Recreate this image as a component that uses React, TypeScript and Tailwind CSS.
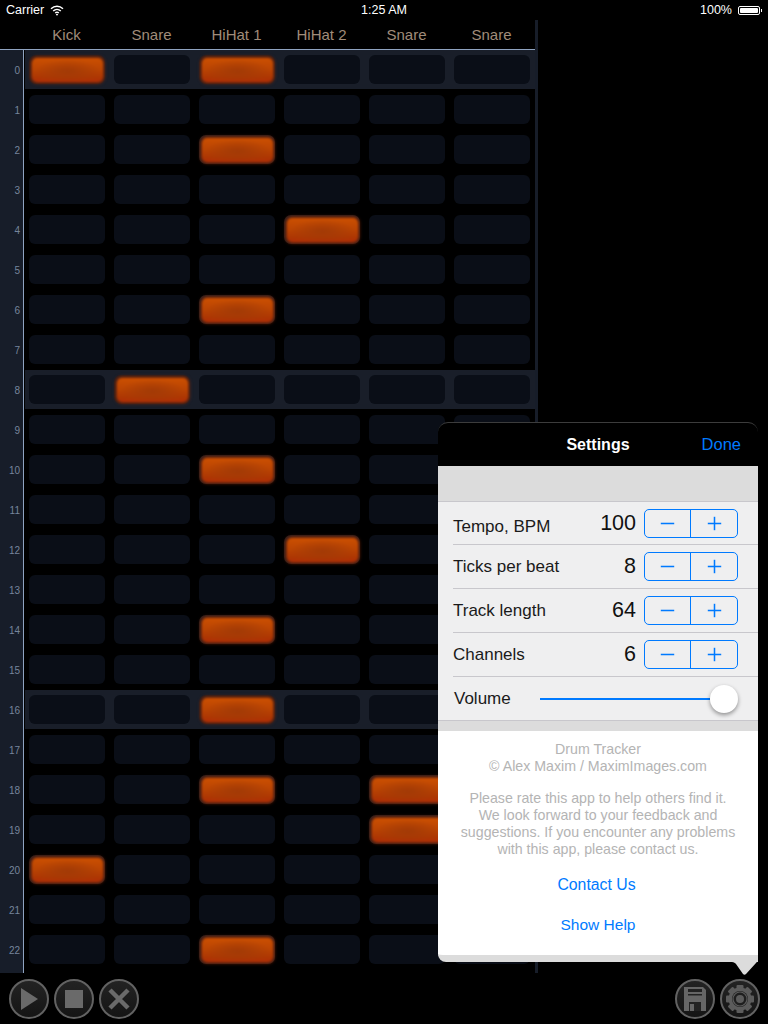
import { Minus, Plus } from 'lucide-react';

const channels = ['Kick', 'Snare', 'HiHat 1', 'HiHat 2', 'Snare', 'Snare'];

// row -> active channels
const hits: Record<number, number[]> = {
  0: [0, 2],
  2: [2],
  4: [3],
  6: [2],
  8: [1],
  10: [2],
  12: [3],
  14: [2],
  16: [2],
  18: [2, 4],
  19: [4],
  20: [0],
  22: [2],
};

const rows = Array.from({ length: 23 }, (_, i) => i);

const Cell = ({ on }: { on: boolean }) => {
  if (!on) return <div className="w-[76px] h-[29px] rounded-[6px] bg-[#0a0e17]" />;
  return (
    <div className="w-[76px] h-[29px] rounded-[7px] bg-[#2a1d1c] flex items-center justify-center">
      <div className="w-[71px] h-[24px] rounded-[5px] blur-[1px] bg-[radial-gradient(ellipse_at_50%_55%,#a23a06_0%,rgba(162,58,6,0)_65%),linear-gradient(180deg,#cb5002_0%,#bb4503_45%,#ad3703_80%,#b22e06_100%)] shadow-[0_0_3px_1px_#9a2c03]" />
    </div>
  );
};

const Row = ({ index }: { index: number }) => {
  const accent = index % 8 === 0;
  return (
    <div className="flex h-10">
      <div className="w-6 shrink-0 bg-[#171d29] border-r border-[#8fa3c0] flex items-center justify-end pr-[3px] text-[10px] text-[#76859c]">
        {index}
      </div>
      <div
        className={
          accent
            ? 'w-[511px] h-[39px] ml-px flex items-center gap-[9px] pl-1 bg-[#191e29]'
            : 'w-[511px] h-[39px] ml-px flex items-center gap-[9px] pl-1'
        }
      >
        {[0, 1, 2, 3, 4, 5].map((c) => (
          <Cell key={c} on={(hits[index] ?? []).includes(c)} />
        ))}
      </div>
    </div>
  );
};

const RoundButton = ({ children }: { children: React.ReactNode }) => (
  <button className="w-10 h-10 rounded-full border-2 border-[#626262] bg-[linear-gradient(180deg,#232323,#151515)] flex items-center justify-center">
    {children}
  </button>
);

const Stepper = () => (
  <div className="w-[94px] h-[29px] rounded-[5px] border border-[#007aff] flex text-[#007aff]">
    <div className="w-[46px] flex items-center justify-center border-r border-[#007aff]">
      <Minus size={23} strokeWidth={1.6} strokeLinecap="butt" />
    </div>
    <div className="flex-1 flex items-center justify-center">
      <Plus size={23} strokeWidth={1.6} strokeLinecap="butt" />
    </div>
  </div>
);

const SettingRow = ({ label, value, first }: { label: string; value: number; first?: boolean }) => (
  <div
    className={
      first
        ? 'h-[43px] ml-[15px] pr-5 flex items-center border-b border-[#c8c7cc]'
        : 'h-11 ml-[15px] pr-5 flex items-center border-b border-[#c8c7cc]'
    }
  >
    <span className={first ? 'text-[17px] text-[#1a1a1a] pt-2' : 'text-[17px] text-[#1a1a1a]'}>{label}</span>
    <span className="ml-auto text-[21.5px] text-[#111] mr-2">{value}</span>
    <Stepper />
  </div>
);

const SettingsPopover = () => (
  <div className="absolute left-[438px] top-[422px] w-[320px] h-[540px] flex flex-col">
    <div className="h-11 shrink-0 bg-black rounded-t-[10px] border-t border-[#3c3c3c] flex items-center justify-center relative">
      <span className="text-[16px] font-bold text-white">Settings</span>
      <span className="absolute right-[17px] text-[16.5px] text-[#007aff]">Done</span>
    </div>
    <div className="h-[36px] shrink-0 bg-[#dcdcdc] border-b border-[#c8c7cc]" />
    <div className="bg-[#efeff0] shrink-0">
      <SettingRow label="Tempo, BPM" value={100} first />
      <SettingRow label="Ticks per beat" value={8} />
      <SettingRow label="Track length" value={64} />
      <SettingRow label="Channels" value={6} />
      <div className="h-11 pl-4 pr-5 flex items-center border-b border-[#c8c7cc]">
        <span className="text-[17px] text-[#1a1a1a] w-[86px] shrink-0">Volume</span>
        <div className="flex-1 flex items-center pt-px">
          <div className="flex-1 h-[2px] bg-[#007aff]" />
          <div className="w-7 h-7 rounded-full bg-white shadow-[0_2px_4px_rgba(0,0,0,0.4)]" />
        </div>
      </div>
    </div>
    <div className="h-[10px] shrink-0 bg-[#dcdcdc]" />
    <div className="flex-1 bg-white rounded-b-[8px] rounded-br-none border-b-[7px] border-[#dcdcdc] flex flex-col items-center text-center pt-[10px] text-[14.2px] leading-[16.7px] text-[#b4b4b4]">
      <p>Drum Tracker</p>
      <p>© Alex Maxim / MaximImages.com</p>
      <p className="mt-[16px]">
        Please rate this app to help others find it.
        <br />
        We look forward to your feedback and
        <br />
        suggestions. If you encounter any problems
        <br />
        with this app, please contact us.
      </p>
      <a className="mt-[18px] pr-[3px] text-[15.8px] leading-5 text-[#007aff]">Contact Us</a>
      <a className="mt-5 text-[15.5px] leading-5 text-[#007aff]">Show Help</a>
    </div>
    <svg className="absolute left-[292px] top-[538px]" width="28" height="16" viewBox="0 0 28 16">
      <path d="M0 2 H2 C4 2 5 3 6 4 L13 14 Q14.500 15.500 16 14 L26 3 Q28 1 28 0 V0 H0 Z" fill="#dcdcdc" />
    </svg>
  </div>
);

export default function App() {
  return (
    <div className="relative w-[768px] h-[1024px] overflow-hidden bg-black font-['Liberation_Sans',sans-serif]">
      {/* status bar */}
      <div className="h-5 flex items-center px-[6px] text-[12.500px] text-white relative">
        <span>Carrier</span>
        <svg className="ml-[6px]" width="14" height="11" viewBox="0 0 14 11" fill="none" stroke="white" strokeWidth="1.400">
          <path d="M1 3.800 C4.500 0.300 9.500 0.300 13 3.800" />
          <path d="M3.200 6 C5.400 3.900 8.600 3.900 10.800 6" />
          <path d="M5.200 8 C6.300 7 7.700 7 8.800 8" />
          <path d="M7 10.800 L5.800 9.500 C6.500 8.900 7.500 8.900 8.200 9.500 Z" fill="white" stroke="none" />
        </svg>
        <span className="absolute left-0 right-0 text-center">1:25 AM</span>
        <span className="ml-auto mr-[6px]">100%</span>
        <div className="w-[22px] h-[9px] border border-white rounded-[2px] p-px mr-px">
          <div className="w-full h-full bg-white rounded-[1px]" />
        </div>
        <div className="w-px h-[3px] bg-white" />
      </div>

      {/* tracker grid */}
      <div className="flex w-[538px]">
        <div className="w-[535px] shrink-0">
          <div className="h-[30px] pl-6 flex items-center border-b border-[#8fa3c0] text-[15px] text-[#a08c7a] pt-[1px]">
            {channels.map((name, i) => (
              <div key={i} className="w-[85px] text-center">
                {name}
              </div>
            ))}
          </div>
          {rows.map((r) => (
            <Row key={r} index={r} />
          ))}
          <div className="h-[3px] w-6 bg-[#171d29] border-r border-[#8fa3c0]" />
        </div>
        <div className="w-[3px] bg-[#171d29]" />
      </div>

      {/* toolbar */}
      <div className="flex items-center justify-between px-2 pt-[6px]">
        <div className="flex gap-[5px] pl-px">
          <RoundButton>
            <svg width="20" height="24" viewBox="0 0 20 24">
              <path d="M2 1 L19 12 L2 23 Z" fill="#6a6a6a" />
            </svg>
          </RoundButton>
          <RoundButton>
            <div className="w-[18px] h-[18px] bg-[#6a6a6a]" />
          </RoundButton>
          <RoundButton>
            <svg width="24" height="24" viewBox="0 0 24 24">
              <path d="M3 3 L21 21 M21 3 L3 21" stroke="#6a6a6a" strokeWidth="4.500" />
            </svg>
          </RoundButton>
        </div>
        <div className="flex gap-[5px]">
          <RoundButton>
            <svg width="24" height="26" viewBox="0 0 24 26">
              <path d="M1 1 H20 L23 4 V25 H1 Z" fill="#666666" />
              <rect x="5" y="3" width="14" height="3" fill="#222222" />
              <rect x="5" y="8" width="14" height="1.500" fill="#222222" />
              <rect x="6" y="16" width="12" height="9" fill="#222222" />
              <rect x="7" y="18" width="4" height="7" fill="#666666" />
            </svg>
          </RoundButton>
          <RoundButton>
            <svg width="32" height="32" viewBox="0 0 32 32">
              <g fill="#5c5c5c">
                {[0, 45, 90, 135].map((deg) => (
                  <rect key={deg} x="12.500" y="2" width="7" height="28" rx="1" transform={`rotate(${deg} 16 16)`} />
                ))}
                <circle cx="16" cy="16" r="11.500" />
              </g>
              <circle cx="16" cy="16" r="8" fill="#1f1f1f" />
              <circle cx="16" cy="16" r="7" fill="none" stroke="#5c5c5c" strokeWidth="1.200" />
              <circle cx="16" cy="16" r="4" fill="#5c5c5c" />
            </svg>
          </RoundButton>
        </div>
      </div>

      <SettingsPopover />
    </div>
  );
}
